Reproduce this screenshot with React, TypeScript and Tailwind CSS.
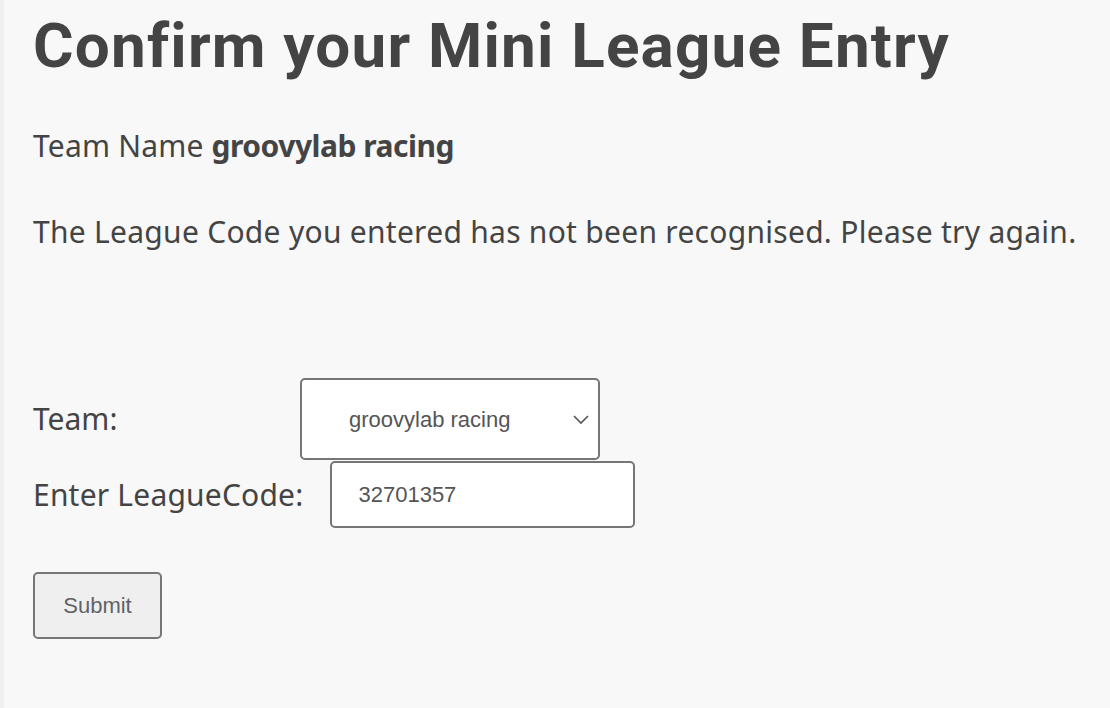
import { useState } from 'react';

export default function App() {
  const [team, setTeam] = useState('groovylab racing');
  const [code, setCode] = useState('32701357');

  return (
    <div className="min-h-[708px] w-full bg-[#f8f8f8] flex">
      {/* thin left rail */}
      <div className="w-[4px] bg-[#efefef] shrink-0" />
      <div className="pl-[29px] pt-[10px] text-[#444444] font-['Noto_Sans',sans-serif]">
        <h1 className="text-[62px] leading-[72px] font-bold tracking-[1.2px] font-['Roboto',sans-serif]">
          Confirm your Mini League Entry
        </h1>

        <p className="mt-[44px] text-[30px] leading-[40px] tracking-[0.2px]">
          Team Name <b className="font-bold tracking-[-0.5px]">{team}</b>
        </p>

        <p className="mt-[46px] text-[30px] leading-[40px] tracking-[0.28px]">
          The League Code you entered has not been recognised. Please try again.
        </p>

        <form className="mt-[126px]" onSubmit={(e) => e.preventDefault()}>
          <div className="flex items-center">
            <label className="w-[267px] text-[30px] leading-[40px]">Team:</label>
            <div className="relative">
              <select
                value={team}
                onChange={(e) => setTeam(e.target.value)}
                className="appearance-none w-[300px] h-[82px] pl-[47px] pr-[40px] bg-white border-2 border-[#767676] rounded-[5px] text-[22px] text-[#555555] font-['Liberation_Sans',sans-serif]"
              >
                <option>groovylab racing</option>
              </select>
              <svg
                className="absolute right-[10px] top-1/2 -translate-y-1/2 pointer-events-none"
                width="18"
                height="12"
                viewBox="0 0 18 12"
                fill="none"
              >
                <path d="M2 3l7 7 7-7" stroke="#555" strokeWidth="1.6" />
              </svg>
            </div>
          </div>

          <div className="flex items-center mt-[1px]">
            <label className="text-[30px] leading-[40px] mr-[27px] tracking-[0.2px]">Enter LeagueCode:</label>
            <input
              value={code}
              onChange={(e) => setCode(e.target.value)}
              className="w-[305px] h-[67px] px-[26px] bg-white border-2 border-[#767676] rounded-[5px] text-[22px] text-[#555555] font-['Liberation_Sans',sans-serif]"
            />
          </div>

          <button
            type="submit"
            className="mt-[44px] w-[129px] h-[67px] bg-[#efefef] border-2 border-[#767676] rounded-[5px] text-[22px] text-[#5f6368] font-['Liberation_Sans',sans-serif]"
          >
            Submit
          </button>
        </form>
      </div>
    </div>
  );
}
